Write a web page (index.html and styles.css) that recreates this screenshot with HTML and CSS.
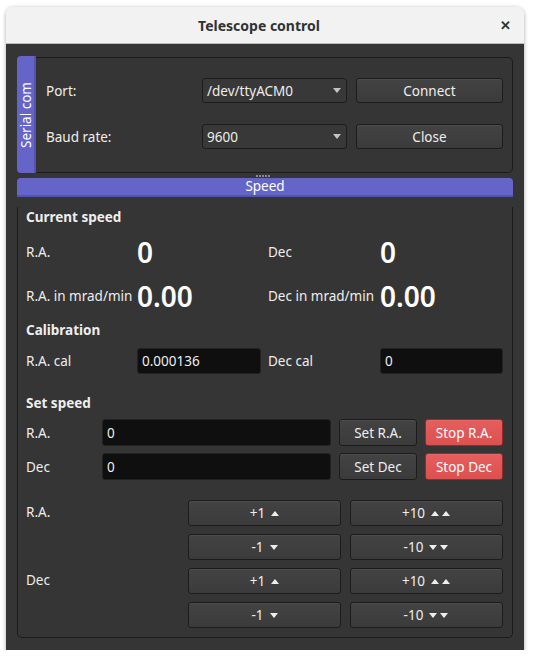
FILE: index.html
```html
<!DOCTYPE html>
<html>
<head>
<meta charset="utf-8">
<link rel="stylesheet" href="styles.css">
</head>
<body>
<div class="window">
  <div class="titlebar">
    <span class="title">Telescope control</span>
    <span class="close">✕</span>
  </div>
  <div class="content">
    <div class="serial">
      <div class="vtab"><span>Serial com</span></div>
      <div class="sframe">
        <div class="srow">
          <span class="slabel">Port:</span>
          <div class="combo"><span>/dev/ttyACM0</span><svg width="8" height="5" viewBox="0 0 8 5"><polygon points="0,0 8,0 4,5" fill="#c4c4c4"/></svg></div>
          <div class="btn sbtn">Connect</div>
        </div>
        <div class="srow">
          <span class="slabel">Baud rate:</span>
          <div class="combo"><span>9600</span><svg width="8" height="5" viewBox="0 0 8 5"><polygon points="0,0 8,0 4,5" fill="#c4c4c4"/></svg></div>
          <div class="btn sbtn">Close</div>
        </div>
      </div>
    </div>
    <div class="handle"><span></span></div>
    <div class="htab">Speed</div>
    <div class="speed">
      <div class="head h1">Current speed</div>
      <div class="vrow r1">
        <div class="half"><span class="lab">R.A.</span><span class="big">0</span></div>
        <div class="half right"><span class="lab">Dec</span><span class="big">0</span></div>
      </div>
      <div class="vrow r2">
        <div class="half"><span class="lab">R.A. in mrad/min</span><span class="big">0.00</span></div>
        <div class="half right"><span class="lab">Dec in mrad/min</span><span class="big">0.00</span></div>
      </div>
      <div class="head h2">Calibration</div>
      <div class="vrow r3">
        <div class="half"><span class="lab">R.A. cal</span><div class="entry cal">0.000136</div></div>
        <div class="half right"><span class="lab">Dec cal</span><div class="entry cal2">0</div></div>
      </div>
      <div class="head h3">Set speed</div>
      <div class="setrow s1">
        <span class="slab">R.A.</span>
        <div class="entry long">0</div>
        <div class="btn setb">Set R.A.</div>
        <div class="btn stop">Stop R.A.</div>
      </div>
      <div class="setrow s2">
        <span class="slab">Dec</span>
        <div class="entry long">0</div>
        <div class="btn setb">Set Dec</div>
        <div class="btn stop">Stop Dec</div>
      </div>
      <div class="steps">
        <div class="srw">
          <span class="stlab">R.A.</span>
          <div class="btn step">+1 <svg class="tri" width="8" height="5" viewBox="0 0 8 5"><polygon points="0,5 8,5 4,0"/></svg></div>
          <div class="btn step">+10 <svg class="tri" width="20" height="5" viewBox="0 0 20 5"><polygon points="0,5 8,5 4,0"/><polygon points="11,5 19,5 15,0"/></svg></div>
        </div>
        <div class="srw">
          <span class="stlab"></span>
          <div class="btn step">-1 <svg class="tri" width="8" height="5" viewBox="0 0 8 5"><polygon points="0,0 8,0 4,5"/></svg></div>
          <div class="btn step">-10 <svg class="tri" width="20" height="5" viewBox="0 0 20 5"><polygon points="0,0 8,0 4,5"/><polygon points="11,0 19,0 15,5"/></svg></div>
        </div>
        <div class="srw">
          <span class="stlab">Dec</span>
          <div class="btn step">+1 <svg class="tri" width="8" height="5" viewBox="0 0 8 5"><polygon points="0,5 8,5 4,0"/></svg></div>
          <div class="btn step">+10 <svg class="tri" width="20" height="5" viewBox="0 0 20 5"><polygon points="0,5 8,5 4,0"/><polygon points="11,5 19,5 15,0"/></svg></div>
        </div>
        <div class="srw">
          <span class="stlab"></span>
          <div class="btn step">-1 <svg class="tri" width="8" height="5" viewBox="0 0 8 5"><polygon points="0,0 8,0 4,5"/></svg></div>
          <div class="btn step">-10 <svg class="tri" width="20" height="5" viewBox="0 0 20 5"><polygon points="0,0 8,0 4,5"/><polygon points="11,0 19,0 15,5"/></svg></div>
        </div>
      </div>
    </div>
  </div>
</div>
</body>
</html>
```
FILE: styles.css
```css
* { box-sizing: border-box; }
html, body { margin: 0; padding: 0; background: #ffffff; }
body {
  font-family: "Noto Sans", "Open Sans", sans-serif;
  font-size: 13.5px;
  color: #eeeeec;
}
.window {
  margin: 7px 0 0 6px;
  width: 518px;
  border-radius: 8px 8px 0 0;
  box-shadow: 0 1px 4px rgba(0,0,0,0.35);
  overflow: hidden;
}
.titlebar {
  height: 37px;
  background: #f2f2f2;
  border-bottom: 1px solid #bdbdbd;
  display: flex;
  align-items: center;
  justify-content: center;
  position: relative;
  color: #2e3436;
}
.title {
  font-weight: bold;
  font-size: 14px;
  margin-left: -12px;
}
.close {
  position: absolute;
  right: 13px;
  top: 9px;
  font-size: 13px;
  font-weight: bold;
  color: #2e3436;
}
.content {
  background: #353535;
  padding: 12px 11px 12px 11px;
}
.serial {
  display: flex;
  height: 117px;
}
.vtab {
  width: 19px;
  flex: 0 0 19px;
  background: #6565c9;
  border-right: 2px solid #5353b0;
  border-radius: 4px 0 0 4px;
  display: flex;
  align-items: center;
  justify-content: center;
}
.vtab span {
  transform: rotate(-90deg);
  white-space: nowrap;
  color: #ffffff;
  font-size: 13.5px;
  margin-left: 1px;
}
.sframe {
  flex: 1;
  margin-top: 1px;
  border: 1px solid #1b1b1b;
  border-left: none;
  border-radius: 0 5px 5px 0;
  padding: 20px 0 0 10px;
  display: flex;
  flex-direction: column;
  gap: 21px;
}
.srow {
  display: flex;
  align-items: center;
  height: 25px;
}
.slabel {
  flex: 0 0 156px;
}
.combo {
  flex: 0 0 145px;
  height: 25px;
  background: #383838;
  border: 1px solid #1c1c1c;
  border-radius: 3px;
  display: flex;
  align-items: center;
  justify-content: space-between;
  padding: 0 5px 0 4px;
}
.btn {
  height: 100%;
  background: linear-gradient(#434343, #3b3b3b);
  border: 1px solid #1c1c1c;
  border-radius: 3px;
  box-shadow: inset 0 1px rgba(255,255,255,0.05);
  display: flex;
  align-items: center;
  justify-content: center;
  color: #eeeeec;
  white-space: nowrap;
}
.sbtn {
  flex: 0 0 147px;
  margin-left: 9px;
}
.handle {
  height: 5px;
  display: flex;
  justify-content: center;
  align-items: center;
}
.handle span {
  width: 14px;
  height: 2px;
  margin-left: -5px;
  background: repeating-linear-gradient(90deg, #8a8a8a 0 2px, transparent 2px 3px);
  margin-top: 1px;
}
.htab {
  height: 19px;
  background: #6565c9;
  border-bottom: 2px solid #5353b0;
  border-radius: 4px 4px 0 0;
  color: #ffffff;
  text-align: center;
  line-height: 17px;
  font-size: 13.5px;
}
.speed {
  border: 1px solid #1b1b1b;
  border-top: none;
  border-radius: 0 0 5px 5px;
  padding: 0 9px 9px 8px;
}
.head {
  font-weight: bold;
  height: 20px;
  line-height: 20px;
}
.h1 { margin-top: 10px; }
.h2 { margin-top: 9px; }
.h3 { margin-top: 19px; }
.vrow {
  display: flex;
  align-items: center;
  gap: 7px;
}
.r1 { margin-top: 10px; height: 30px; }
.r2 { margin-top: 14px; height: 30px; }
.r3 { margin-top: 8px; height: 26px; }
.half {
  flex: 0 0 235px;
  display: flex;
  align-items: center;
  height: 100%;
}
.half .lab { flex: 0 0 111px; white-space: nowrap; }
.half.right .lab { flex: 0 0 112px; }
.big {
  font-size: 28px;
  font-weight: 600;
  line-height: 30px;
  color: #ffffff;
}
.entry {
  height: 100%;
  background: #0f0f0f;
  border: 1px solid #222222;
  border-radius: 3px;
  display: flex;
  align-items: center;
  padding-left: 4px;
  color: #eeeeec;
}
.cal { flex: 0 0 124px; }
.cal2 { flex: 0 0 123px; }
.setrow {
  display: flex;
  align-items: center;
  height: 27px;
}
.s1 { margin-top: 6px; }
.s2 { margin-top: 7px; }
.slab { flex: 0 0 76px; }
.long { flex: 0 0 229px; }
.setb { flex: 0 0 78px; margin-left: 8px; }
.stop {
  flex: 0 0 78px;
  margin-left: 8px;
  background: linear-gradient(#e65e5e, #dc5050);
  border-color: #9a2a2a;
  color: #ffffff;
}
.steps {
  margin-top: 20px;
  display: flex;
  flex-direction: column;
  gap: 8px;
}
.srw {
  display: flex;
  align-items: center;
  height: 26px;
}
.stlab { flex: 0 0 162px; align-self: flex-start; line-height: 24px; }
.step { flex: 0 0 153px; margin-right: 9px; gap: 6px; }
.step:last-child { margin-right: 0; }
.tri { fill: #eeeeec; margin-top: 1px; }
```
